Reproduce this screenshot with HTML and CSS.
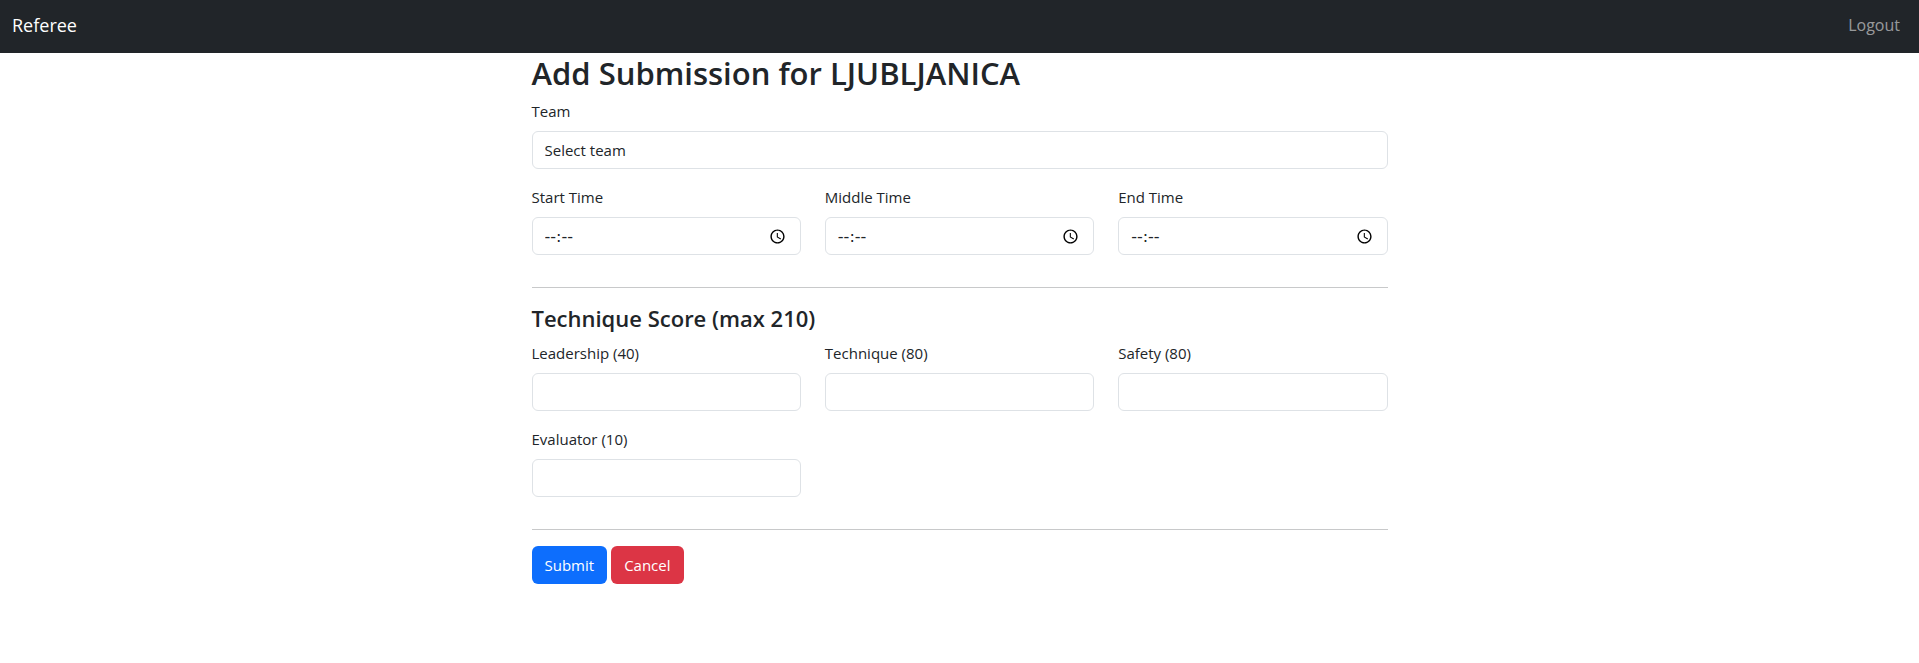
FILE: index.html
```html
<!DOCTYPE html>
<html lang="en">
<head>
<meta charset="utf-8">
<meta name="viewport" content="width=device-width, initial-scale=1">
<title>Add Submission</title>
<link rel="stylesheet" href="styles.css">
</head>
<body>
<nav class="navbar">
  <a class="brand" href="#">Referee</a>
  <a class="nav-link" href="#">Logout</a>
</nav>
<main class="container">
  <h1 class="title">Add Submission for LJUBLJANICA</h1>
  <form>
    <div class="field">
      <label class="label" for="team">Team</label>
      <select class="control" id="team"><option>Select team</option></select>
    </div>
    <div class="row">
      <div class="field">
        <label class="label" for="start">Start Time</label>
        <div class="time">
          <input class="control" id="start" type="text" value="--:--">
          <button class="clock" type="button" aria-label="Pick start time"><svg viewBox="0 0 24 24" aria-hidden="true"><path d="M12 2C6.500 2 2 6.500 2 12s4.500 10 10 10 10-4.500 10-10S17.500 2 12 2zm0 18c-4.400 0-8-3.600-8-8s3.600-8 8-8 8 3.600 8 8-3.600 8-8 8zm.5-13H11v6l5.200 3.200.8-1.300-4.500-2.700V7z"/></svg></button>
        </div>
      </div>
      <div class="field">
        <label class="label" for="middle">Middle Time</label>
        <div class="time">
          <input class="control" id="middle" type="text" value="--:--">
          <button class="clock" type="button" aria-label="Pick middle time"><svg viewBox="0 0 24 24" aria-hidden="true"><path d="M12 2C6.500 2 2 6.500 2 12s4.500 10 10 10 10-4.500 10-10S17.500 2 12 2zm0 18c-4.400 0-8-3.600-8-8s3.600-8 8-8 8 3.600 8 8-3.600 8-8 8zm.5-13H11v6l5.200 3.200.8-1.300-4.500-2.700V7z"/></svg></button>
        </div>
      </div>
      <div class="field">
        <label class="label" for="end">End Time</label>
        <div class="time">
          <input class="control" id="end" type="text" value="--:--">
          <button class="clock" type="button" aria-label="Pick end time"><svg viewBox="0 0 24 24" aria-hidden="true"><path d="M12 2C6.500 2 2 6.500 2 12s4.500 10 10 10 10-4.500 10-10S17.500 2 12 2zm0 18c-4.400 0-8-3.600-8-8s3.600-8 8-8 8 3.600 8 8-3.600 8-8 8zm.5-13H11v6l5.200 3.200.8-1.300-4.500-2.700V7z"/></svg></button>
        </div>
      </div>
    </div>
    <hr class="rule">
    <h2 class="subtitle">Technique Score (max 210)</h2>
    <div class="row">
      <div class="field">
        <label class="label" for="leadership">Leadership (40)</label>
        <input class="control" id="leadership" type="text" inputmode="numeric">
      </div>
      <div class="field">
        <label class="label" for="technique">Technique (80)</label>
        <input class="control" id="technique" type="text" inputmode="numeric">
      </div>
      <div class="field">
        <label class="label" for="safety">Safety (80)</label>
        <input class="control" id="safety" type="text" inputmode="numeric">
      </div>
      <div class="field">
        <label class="label" for="evaluator">Evaluator (10)</label>
        <input class="control" id="evaluator" type="text" inputmode="numeric">
      </div>
    </div>
    <hr class="rule">
    <div class="actions">
      <button class="btn btn-primary" type="submit">Submit</button>
      <button class="btn btn-danger" type="button">Cancel</button>
    </div>
  </form>
</main>
</body>
</html>
```

FILE: styles.css
```css
*, *::before, *::after { box-sizing: border-box; }
body {
  margin: 0;
  background: #fff;
  color: #212529;
  font-family: "Segoe UI", "Open Sans", "Noto Sans", sans-serif;
  font-size: 15px;
  line-height: 24px;
}
.navbar {
  display: flex;
  align-items: center;
  justify-content: space-between;
  padding: 10px 19px 13px 12px;
  background: #212529;
}
.navbar a { text-decoration: none; }
.brand { color: #fff; font-size: 18px; line-height: 30px; }
.nav-link { color: rgba(255, 255, 255, 0.55); font-size: 16px; }
.container { max-width: 880px; padding: 0 12px; margin: 0 auto; }
.title { margin: 0 0 6px; font-size: 31px; font-weight: 600; line-height: 40px; }
.subtitle { margin: 0 0 8px; font-size: 22px; font-weight: 600; line-height: 29px; }
.field { margin-bottom: 16px; }
.label { display: block; margin-bottom: 8px; }
.control {
  display: block;
  width: 100%;
  height: 38px;
  padding: 6px 12px;
  border: 1px solid #dee2e6;
  border-radius: 6px;
  background: #fff;
  color: inherit;
  font: inherit;
  appearance: none;
}
.row { display: grid; grid-template-columns: repeat(3, 1fr); column-gap: 24px; }
.time { position: relative; }
.time .control { font-family: "DejaVu Sans", sans-serif; font-size: 16px; }
.clock {
  position: absolute;
  top: 0;
  bottom: 0;
  right: 15px;
  display: flex;
  align-items: center;
  padding: 0;
  border: 0;
  background: none;
}
.clock svg { width: 17px; height: 17px; fill: #000; }
.rule { margin: 16px 0; border: 0; border-top: 1px solid #c8c9ca; }
.actions { display: flex; gap: 4px; }
.btn {
  padding: 6px 12px;
  border: 1px solid transparent;
  border-radius: 6px;
  color: #fff;
  font: inherit;
}
.btn-primary { background: #0d6efd; }
.btn-danger { background: #dc3545; }
```
